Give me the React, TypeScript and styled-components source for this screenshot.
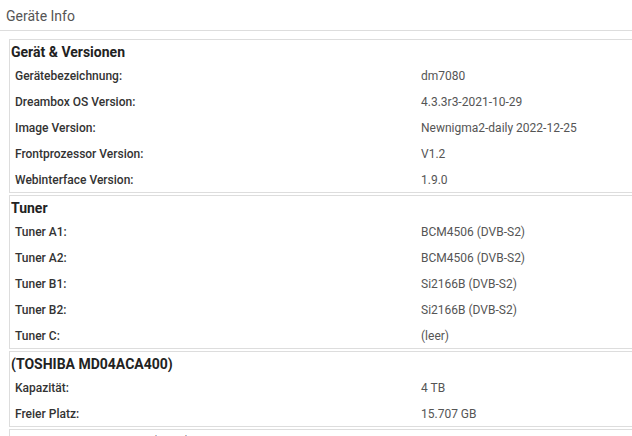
import React from "react";
import styled, { createGlobalStyle } from "styled-components";

const Global = createGlobalStyle`
  html, body { margin: 0; padding: 0; background: #fff; }
  body {
    width: 632px;
    height: 436px;
    overflow: hidden;
    font-family: Roboto, "Noto Sans", Arial, sans-serif;
  }
`;

const Page = styled.div`
  display: flex;
  flex-direction: column;
`;

const Title = styled.div`
  height: 30px;
  line-height: 32px;
  padding-left: 6px;
  font-size: 14px;
  color: #555;
  border-bottom: 1px solid #ddd;
`;

const Sections = styled.div`
  display: flex;
  flex-direction: column;
  gap: 2px;
  margin: 8px -12px 0 9px;
`;

const Box = styled.section`
  border: 1px solid #ddd;
  display: flex;
  flex-direction: column;
`;

const Header = styled.h2`
  margin: 0;
  height: 22px;
  line-height: 25px;
  padding-left: 1px;
  font-size: 14px;
  font-weight: 700;
  color: #222;
`;

const Row = styled.div`
  display: grid;
  grid-template-columns: 411px 1fr;
  height: 26px;
  box-sizing: border-box;
  padding-top: 2px;
  align-items: center;
  font-size: 12px;
`;

const Label = styled.span`
  padding-left: 5px;
  font-weight: 500;
  color: #333;
`;

const Value = styled.span`
  color: #555;
`;

type Section = { title: string; rows: [string, string][] };

const data: Section[] = [
  {
    title: "Gerät & Versionen",
    rows: [
      ["Gerätebezeichnung:", "dm7080"],
      ["Dreambox OS Version:", "4.3.3r3-2021-10-29"],
      ["Image Version:", "Newnigma2-daily 2022-12-25"],
      ["Frontprozessor Version:", "V1.2"],
      ["Webinterface Version:", "1.9.0"],
    ],
  },
  {
    title: "Tuner",
    rows: [
      ["Tuner A1:", "BCM4506 (DVB-S2)"],
      ["Tuner A2:", "BCM4506 (DVB-S2)"],
      ["Tuner B1:", "Si2166B (DVB-S2)"],
      ["Tuner B2:", "Si2166B (DVB-S2)"],
      ["Tuner C:", "(leer)"],
    ],
  },
  {
    title: "(TOSHIBA MD04ACA400)",
    rows: [
      ["Kapazität:", "4 TB"],
      ["Freier Platz:", "15.707 GB"],
    ],
  },
  {
    title: "Netzwerkschnittstelle (eth0)",
    rows: [],
  },
];

export default function App() {
  return (
    <Page>
      <Global />
      <Title>Geräte Info</Title>
      <Sections>
        {data.map((s) => (
          <Box key={s.title}>
            <Header>{s.title}</Header>
            {s.rows.map(([l, v]) => (
              <Row key={l}>
                <Label>{l}</Label>
                <Value>{v}</Value>
              </Row>
            ))}
          </Box>
        ))}
      </Sections>
    </Page>
  );
}
